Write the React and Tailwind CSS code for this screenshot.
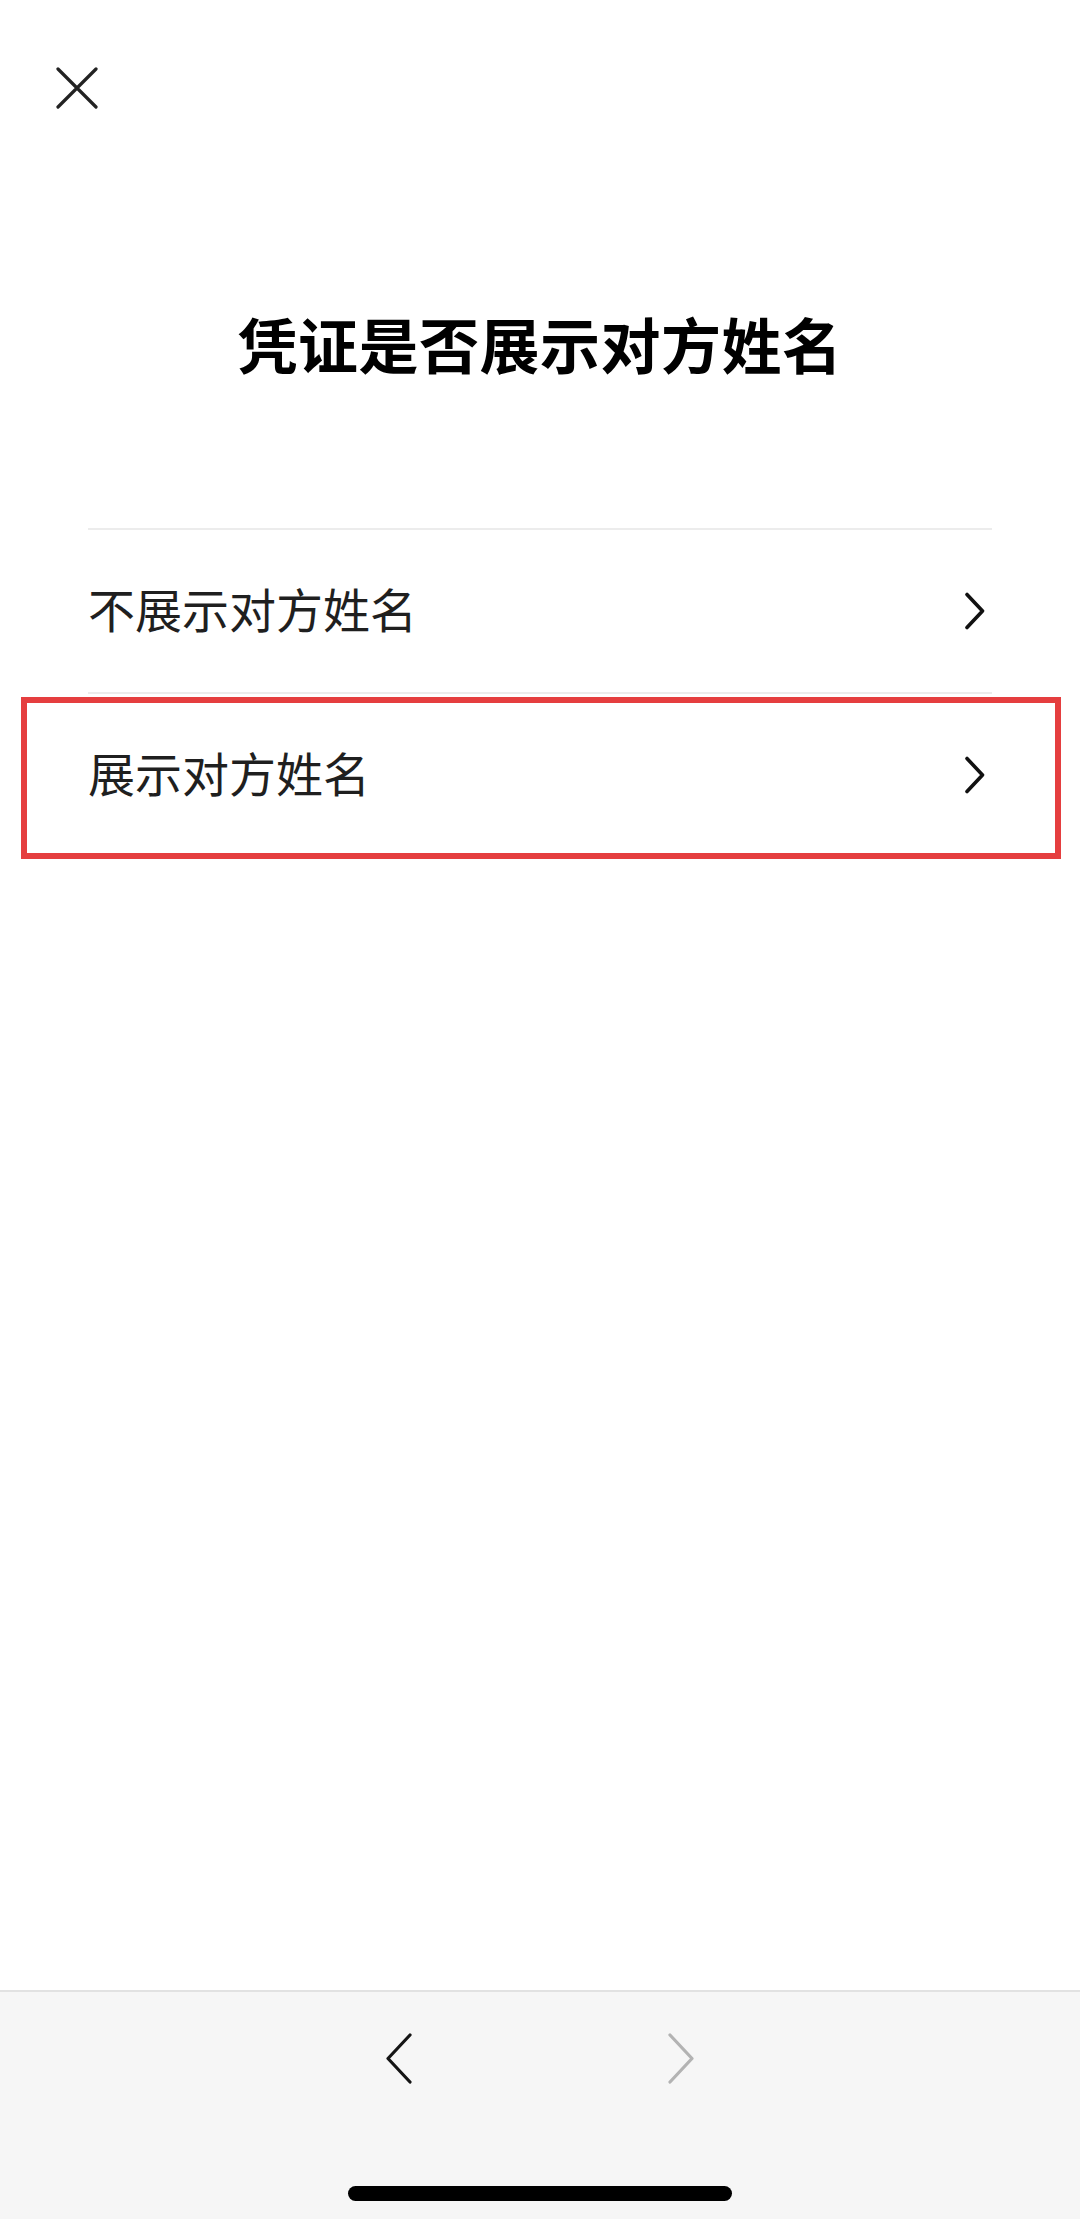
import React from "react";

function RowChevron() {
  return (
    <svg width="22" height="38" viewBox="0 0 22 38" fill="none">
      <path d="M3 2.5 L18.5 19 L3 35.5" stroke="#111" strokeWidth="3.6" strokeLinecap="round" strokeLinejoin="round" />
    </svg>
  );
}

function Row({ label }) {
  return (
    <div className="flex items-center justify-between h-[164px] border-t-2 border-[#ececec] pr-[6px]">
      <span className="text-[47px] leading-none text-[#1f1f1f] mb-[8px]">{label}</span>
      <RowChevron />
    </div>
  );
}

export default function App() {
  return (
    <div
      className="relative w-[1080px] h-[2219px] bg-white flex flex-col overflow-hidden"
      style={{ fontFamily: '"Noto Sans CJK SC", "Noto Sans", sans-serif' }}
    >
      <div className="pt-[67px] pl-[56px] h-[110px]">
        <svg width="42" height="42" viewBox="0 0 42 42" fill="none">
          <path d="M2 2 L40 40 M40 2 L2 40" stroke="#222" strokeWidth="3.2" strokeLinecap="round" />
        </svg>
      </div>

      <h1 className="mt-[203px] text-center text-[60px] leading-none font-bold text-black tracking-[0.5px]">
        凭证是否展示对方姓名
      </h1>

      <div className="mt-[155px] mx-[88px] flex flex-col">
        <Row label="不展示对方姓名" />
        <Row label="展示对方姓名" />
      </div>

      <div className="flex-1" />

      <div className="h-[229px] bg-[#f6f6f6] border-t-2 border-[#e2e2e2] flex flex-col items-center">
        <div className="mt-[41px] flex items-center gap-[254px]">
          <svg width="28" height="51" viewBox="0 0 28 51" fill="none">
            <path d="M25 2 L3 25.5 L25 49" stroke="#151515" strokeWidth="3.2" strokeLinecap="round" strokeLinejoin="round" />
          </svg>
          <svg width="28" height="51" viewBox="0 0 28 51" fill="none">
            <path d="M3 2 L25 25.5 L3 49" stroke="#b3b3b3" strokeWidth="3.2" strokeLinecap="round" strokeLinejoin="round" />
          </svg>
        </div>
        <div className="mt-[102px] w-[384px] h-[15px] rounded-full bg-black" />
      </div>

      <div className="absolute left-[21px] top-[697px] w-[1040px] h-[162px] border-[6px] border-[#e53e3f] pointer-events-none" />
    </div>
  );
}
